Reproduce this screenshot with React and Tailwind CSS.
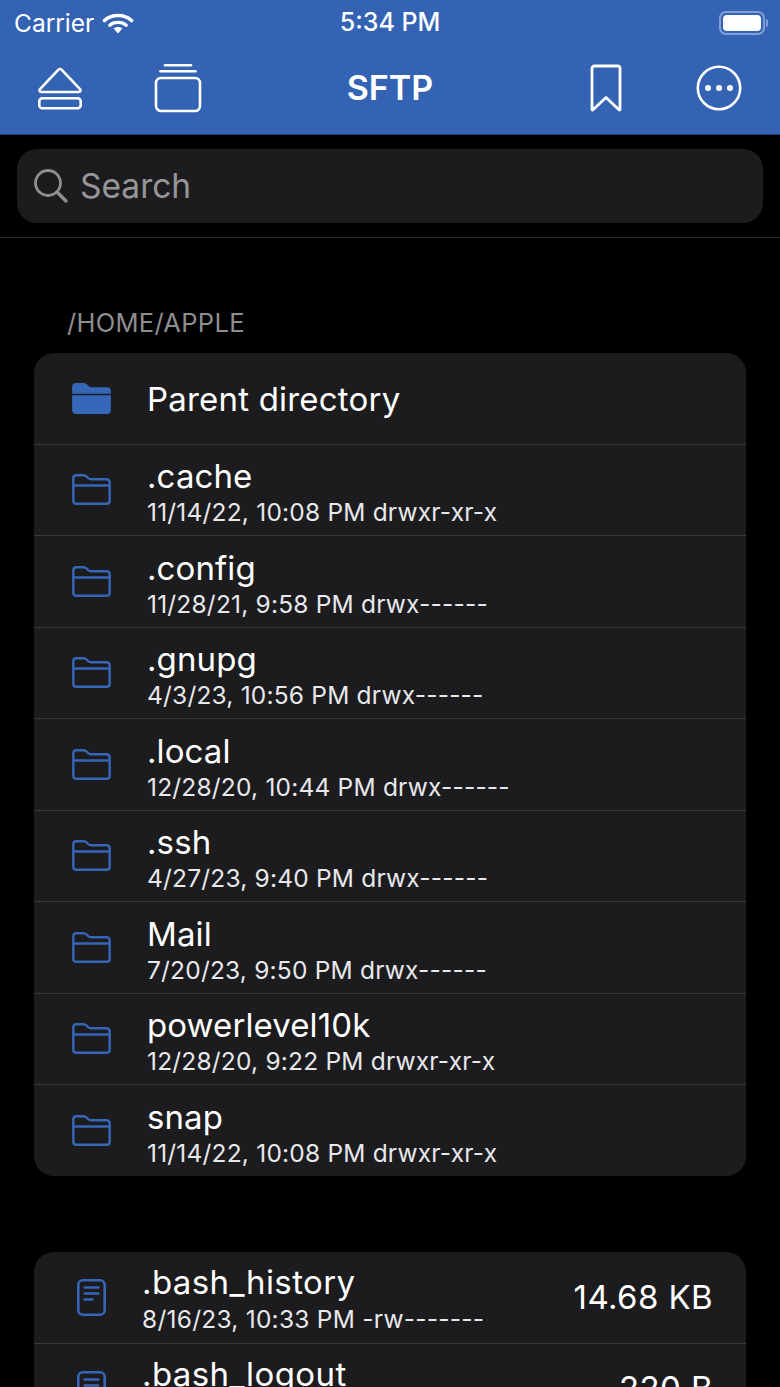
import React from "react";

const font = { fontFamily: "Inter, 'Liberation Sans', sans-serif" };

const folders = [
  [".cache", "11/14/22, 10:08 PM drwxr-xr-x"],
  [".config", "11/28/21, 9:58 PM drwx------"],
  [".gnupg", "4/3/23, 10:56 PM drwx------"],
  [".local", "12/28/20, 10:44 PM drwx------"],
  [".ssh", "4/27/23, 9:40 PM drwx------"],
  ["Mail", "7/20/23, 9:50 PM drwx------"],
  ["powerlevel10k", "12/28/20, 9:22 PM drwxr-xr-x"],
  ["snap", "11/14/22, 10:08 PM drwxr-xr-x"],
];

function Wifi() {
  return (
    <svg width="32" height="24" viewBox="0 0 32 24" fill="none" className="ml-[8px]">
      <path d="M2.5 9.5C9.5 2.8 22.5 2.8 29.5 9.5" stroke="white" strokeWidth="3.6" strokeLinecap="round" />
      <path d="M7.8 14.2C12.2 10.4 19.8 10.4 24.2 14.2" stroke="white" strokeWidth="3.4" strokeLinecap="round" />
      <path d="M11.6 17.6C14 15.6 18 15.6 20.4 17.6L16 22.5Z" fill="white" />
    </svg>
  );
}

function Battery() {
  return (
    <div className="flex items-center">
      <div className="flex h-[24px] w-[46px] items-center rounded-[7px] border-2 border-[#7f9fd6] p-[2px]">
        <div className="h-full w-full rounded-[4px] bg-white" />
      </div>
      <div className="ml-[1px] h-[8px] w-[2px] rounded-r-sm bg-[#7f9fd6]" />
    </div>
  );
}

function EjectIcon() {
  return (
    <svg width="46" height="44" viewBox="0 0 46 44" fill="none" stroke="white" strokeWidth="2.6" strokeLinejoin="round">
      <path d="M21.5 3.6C22.3 2.7 23.7 2.7 24.5 3.6L43 23.2C44 24.4 43.3 26 41.8 26H4.2C2.7 26 2 24.4 3 23.2Z" />
      <rect x="2.3" y="32.3" width="41.4" height="10" rx="3" />
    </svg>
  );
}

function TabsIcon() {
  return (
    <svg width="48" height="50" viewBox="0 0 48 50" fill="none" stroke="white" strokeWidth="2.6" strokeLinecap="round">
      <path d="M11 2.3H37" />
      <path d="M6.5 8.3H41.5" />
      <rect x="2" y="15" width="44" height="33" rx="5" />
    </svg>
  );
}

function BookmarkIcon() {
  return (
    <svg width="32" height="48" viewBox="0 0 32 48" fill="none" stroke="white" strokeWidth="2.8" strokeLinejoin="round">
      <path d="M4.5 2H27.5C29 2 30 3 30 4.5V45.4C30 46 29.4 46.2 29 45.8L16 33.4L3 45.8C2.6 46.2 2 46 2 45.4V4.5C2 3 3 2 4.5 2Z" />
    </svg>
  );
}

function MoreIcon() {
  return (
    <svg width="46" height="46" viewBox="0 0 46 46">
      <circle cx="23" cy="23" r="21.2" fill="none" stroke="white" strokeWidth="2.6" />
      <circle cx="12" cy="23" r="3" fill="white" />
      <circle cx="23" cy="23" r="3" fill="white" />
      <circle cx="34" cy="23" r="3" fill="white" />
    </svg>
  );
}

function SearchIcon() {
  return (
    <svg width="36" height="36" viewBox="0 0 36 36" fill="none" stroke="#8f8f92" strokeWidth="2.8" strokeLinecap="round">
      <circle cx="15" cy="15" r="12.5" />
      <path d="M24.5 24.5L33 33" strokeWidth="3.4" />
    </svg>
  );
}

function FolderFilled() {
  return (
    <svg width="39" height="31" viewBox="0 0 40 32" fill="#3566b8">
      <path d="M0 11V4C0 1.6 1.6 0 4 0H11.5C13.4 0 14.4 .6 15.6 1.7L17.2 3.3C18 4 18.6 4.3 19.8 4.3H36C38.4 4.3 40 5.9 40 8.3V11Z" />
      <path d="M0 12.6H40V28C40 30.4 38.4 32 36 32H4C1.6 32 0 30.4 0 28Z" />
    </svg>
  );
}

function FolderOutline() {
  return (
    <svg width="39" height="31" viewBox="0 0 40 32" fill="none" stroke="#3566b8" strokeWidth="2.5" strokeLinejoin="round">
      <path d="M1.25 27.5V4.5C1.25 2.3 2.4 1.25 4.6 1.25H11.5C13 1.25 13.9 1.5 15 2.6L16.6 4.2C17.5 5 18.2 5.4 19.6 5.4H35.4C37.6 5.4 38.75 6.7 38.75 8.9V27.5C38.75 29.7 37.6 30.75 35.4 30.75H4.6C2.4 30.75 1.25 29.7 1.25 27.5Z" />
      <path d="M1.25 11.8H38.75" />
    </svg>
  );
}

function FileIcon() {
  return (
    <svg width="29" height="37" viewBox="0 0 29 37" fill="none" stroke="#3566b8" strokeLinecap="round">
      <rect x="1.3" y="1.3" width="26.4" height="34.4" rx="4.5" strokeWidth="2.6" />
      <path d="M7.5 8.5H21.5M7.5 14.5H21.5M7.5 20.5H15.5" strokeWidth="2.3" />
    </svg>
  );
}

function FolderRow({ name, meta }) {
  return (
    <div className="flex h-[91.5px] items-center border-t border-[#38383a]">
      <div className="flex w-[114px] shrink-0 justify-center">
        <FolderOutline />
      </div>
      <div className="-ml-px mt-[4px]">
        <div className="text-[33px] leading-[40px] tracking-[0.1px] text-white">{name}</div>
        <div className="mt-[1px] text-[24.5px] leading-[30px] tracking-[0.2px] text-[#e8e8ec]">{meta}</div>
      </div>
    </div>
  );
}

function FileRow({ name, meta, size }) {
  return (
    <div className="flex h-[91px] items-center border-t border-[#38383a] first:border-t-0">
      <div className="flex w-[108px] shrink-0 justify-center pl-[6px]">
        <FileIcon />
      </div>
      <div className="mt-[1px] flex-1">
        <div className="text-[33px] leading-[40px] tracking-[0.4px] text-white">{name}</div>
        <div className="mt-[2px] text-[24.5px] leading-[30px] tracking-[0.25px] text-[#e8e8ec]">{meta}</div>
      </div>
      <div className="pr-[33px] text-[33px] tracking-[0.4px] text-white">{size}</div>
    </div>
  );
}

export default function App() {
  return (
    <div style={font} className="h-[1387px] w-[780px] overflow-hidden bg-black">
      <header className="h-[135px] border-b border-[#1e3c70] bg-[#3463b3] pt-[1px]">
        <div className="relative flex h-[44px] items-center justify-between pl-[14px] pr-[12px] text-[24.5px] text-white">
          <div className="flex items-center">
            Carrier
            <Wifi />
          </div>
          <div className="absolute left-0 right-0 text-center text-[25px] font-medium">5:34 PM</div>
          <Battery />
        </div>
        <div className="relative flex h-[89px] items-center pl-[37px] pr-[38px] pb-[4px]">
          <EjectIcon />
          <div className="ml-[71px]"><TabsIcon /></div>
          <div className="absolute left-0 right-0 text-center text-[34px] font-semibold text-white">SFTP</div>
          <div className="ml-auto"><BookmarkIcon /></div>
          <div className="ml-[74px]"><MoreIcon /></div>
        </div>
      </header>

      <div className="h-[103px] border-b border-[#2a2a2c] px-[17px] pt-[14px]">
        <div className="flex h-[74px] items-center rounded-[20px] bg-[#1c1c1e] pl-[16px]">
          <SearchIcon />
          <span className="ml-[11px] text-[33.5px] text-[#969698]">Search</span>
        </div>
      </div>

      <div className="px-[34px]">
        <div className="pl-[33px] pt-[68px] text-[25.5px] leading-[34px] tracking-[0.3px] text-[#8e8e90]">/HOME/APPLE</div>
        <div className="mt-[13px] overflow-hidden rounded-[20px] bg-[#1c1c1e]">
          <div className="flex h-[90.5px] items-center">
            <div className="flex w-[114px] shrink-0 justify-center">
              <FolderFilled />
            </div>
            <div className="-ml-px mt-[2px] text-[33px] tracking-[0.2px] text-white">Parent directory</div>
          </div>
          {folders.map(([name, meta]) => (
            <FolderRow key={name} name={name} meta={meta} />
          ))}
        </div>

        <div className="mt-[76.5px] overflow-hidden rounded-[20px] bg-[#1c1c1e]">
          <FileRow name=".bash_history" meta="8/16/23, 10:33 PM -rw-------" size="14.68 KB" />
          <FileRow name=".bash_logout" meta="4/3/23, 10:56 PM -rw-r--r--" size="220 B" />
        </div>
      </div>
    </div>
  );
}
